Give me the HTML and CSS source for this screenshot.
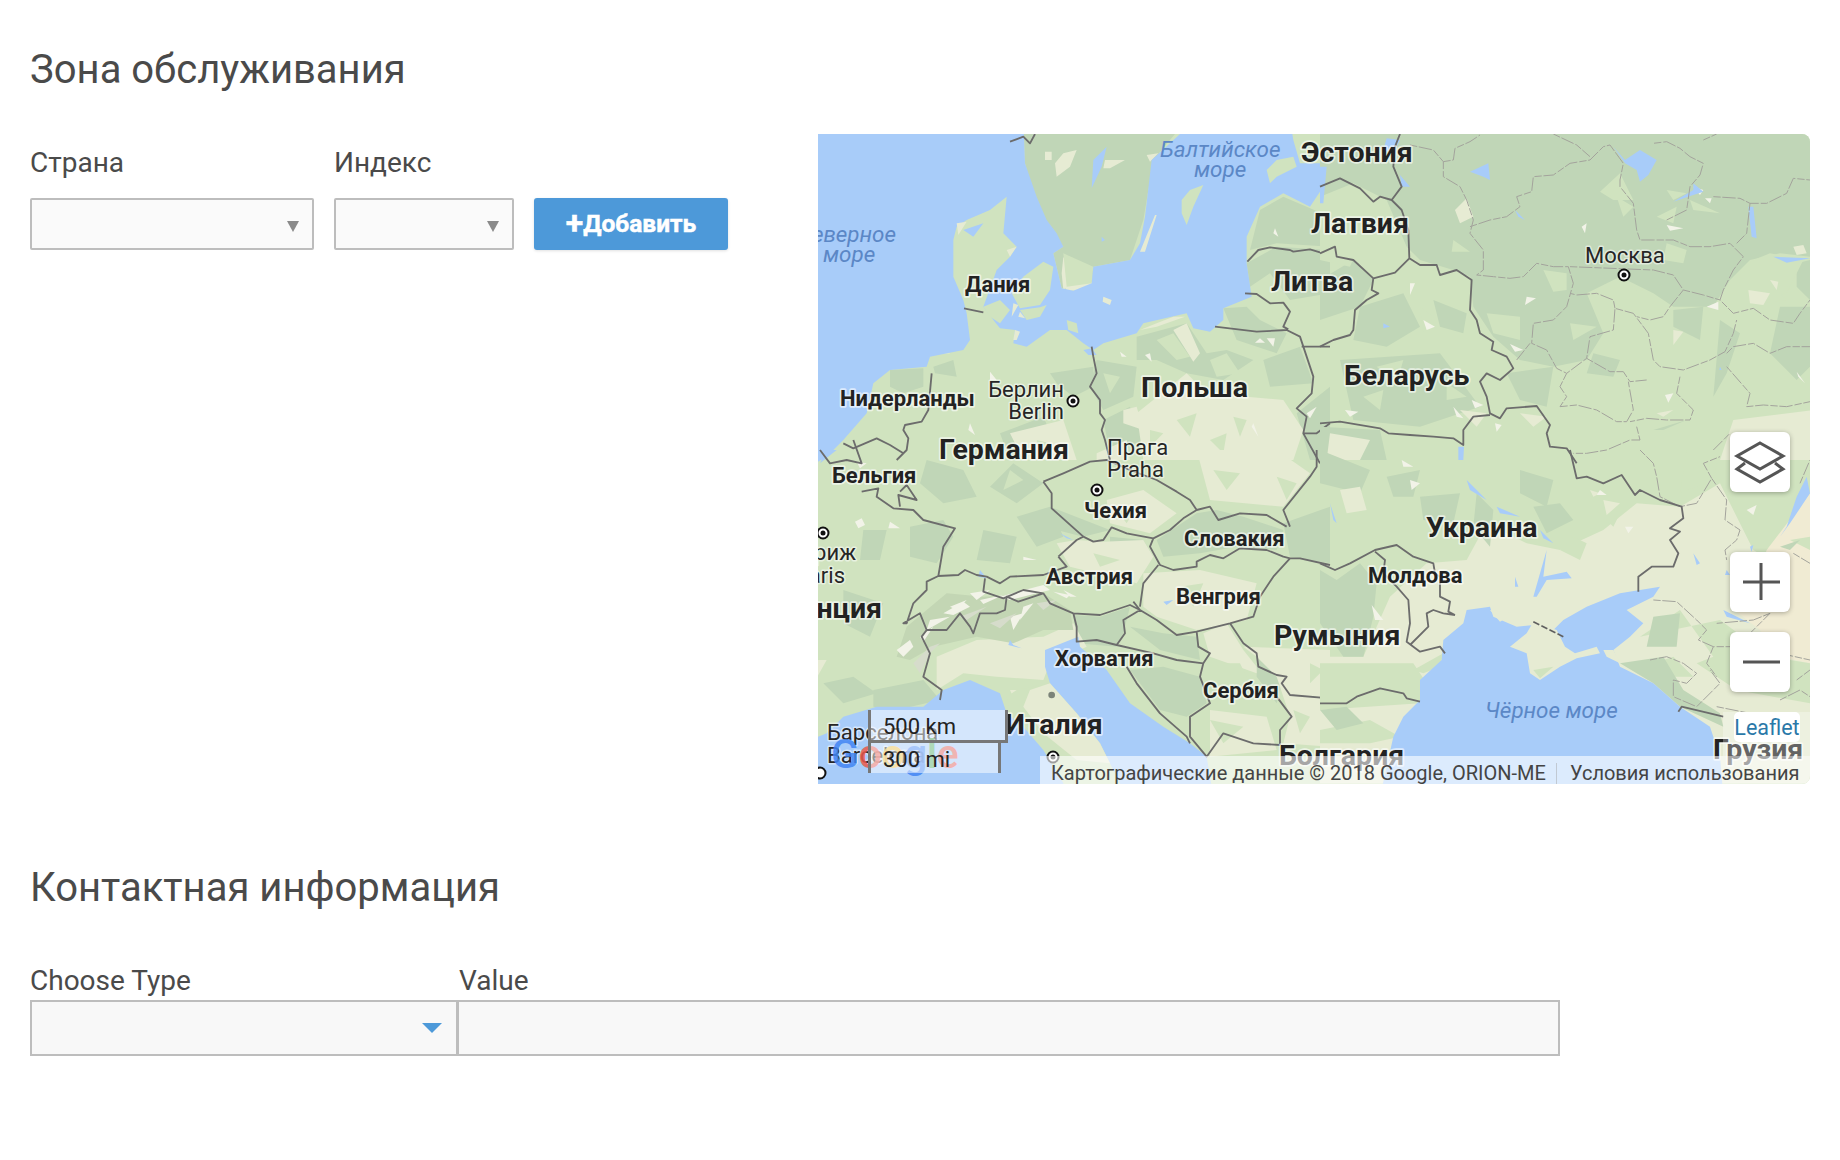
FILE: index.html
```html
<!DOCTYPE html>
<html lang="ru">
<head>
<meta charset="utf-8">
<title>Зона обслуживания</title>
<link rel="stylesheet" href="styles.css">
</head>
<body>
<section class="zone">
  <h2 class="heading">Зона обслуживания</h2>
  <div class="zone-row">
    <form class="zone-form">
      <div class="field field-country">
        <label class="field-label">Страна</label>
        <div class="select"><span class="caret"></span></div>
      </div>
      <div class="field field-zip">
        <label class="field-label">Индекс</label>
        <div class="select"><span class="caret"></span></div>
      </div>
      <button type="button" class="add-btn"><span class="plus">+</span>Добавить</button>
    </form>
    <div class="map">
      <svg class="map-svg" viewBox="818 134 992 650" width="992" height="650" xmlns="http://www.w3.org/2000/svg">
        <rect class="m" x="818" y="134" width="992" height="650"/>

        <!-- north-west quadrant -->
        <g transform="translate(810 120) scale(.33333)">
          <path class="d" d="M640,0H1130L1030,120L1000,300L960,420L850,440L845,490L755,505L730,400L760,380L700,300L670,220L645,130Z"/>
          <path class="d" d="M250,0H470L465,100L440,160L380,185L320,150L255,90Z"/>
          <path class="l" d="M300,42L420,42L400,90L350,110L310,90Z"/>
          <path class="l" d="M255,90L320,150L285,135L250,100Z"/>
          <path class="l" d="M760,100L800,90L780,140L740,170L735,130ZM885,120L945,120L900,145L880,145ZM705,95L725,95L725,120L705,120ZM1010,105L1045,100L1020,125ZM760,410L790,480L760,510L755,460ZM760,490L850,485L845,510L770,512Z"/>
          <path class="m" d="M760,400L850,440L845,490L770,500Z"/>
          <path class="d" d="M1310,430L1400,380L1560,390L1560,520L1440,540L1380,460L1320,500ZM1350,270L1420,230L1560,290L1560,380L1400,370L1320,390Z"/>
          <path class="d" d="M1240,565L1310,560L1350,600L1430,640L1400,700L1280,660ZM980,650L1130,610L1190,700L1250,690L1330,720L1240,780L1130,760L1040,720L980,720ZM860,720L980,740L970,830L880,870L840,800ZM720,760L850,740L850,800L790,830L740,790ZM1360,720L1470,680L1510,790L1380,800ZM1460,880L1560,800L1560,1020L1500,1020ZM880,900L960,860L1000,960L900,1000ZM570,940L700,890L740,980L600,1020ZM240,750L340,745L340,800L280,820L240,800ZM370,740L430,720L440,770L375,760Z"/>
          <path class="m" d="M1040,660L1090,640L1140,710L1100,720ZM1200,720L1250,700L1290,760L1220,770ZM880,760L930,770L900,820ZM1390,560L1420,590L1380,610Z"/>
          <path class="l" d="M980,880L1130,760L1180,810L1310,830L1420,840L1480,930L1450,1020H1000ZM600,940L760,900L800,1020H640ZM1090,630L1130,610L1170,700L1150,725ZM1320,1000L1360,900L1430,960L1400,1020ZM860,1000L950,960L960,1020H860ZM940,870L980,860L1000,930L940,910Z"/>
          <path class="m" d="M1270,890L1310,900L1290,950ZM1100,900L1160,880L1140,950ZM1200,960L1250,940L1240,1000ZM1020,930L1060,940L1020,980ZM680,960L720,970L690,1000Z"/>
          <path class="s" d="M1350,655L1365,668H1335ZM1005,705L1025,725L1020,700ZM930,695L950,710L935,710ZM480,910L495,945L475,930ZM540,755L560,780L540,780ZM395,700L420,700L400,690ZM1395,325L1405,350L1390,340ZM1330,910L1345,950L1325,920ZM1370,655L1390,680L1395,655ZM1490,880L1520,860L1500,895Z"/>
          <path class="w" d="M0,0H640L645,130L680,230L710,300L740,340L760,380L730,400L755,505L790,512L845,490L850,440L960,420L990,370L1005,290L1025,120L1110,42L1110,0H1440L1450,60L1470,130L1560,130L1560,190L1540,200L1500,260L1420,220L1350,260L1310,350L1310,430L1325,530L1240,565L1240,600L1200,635L1150,625L1130,580L1000,610L980,640L880,670L850,690L820,670L770,630L720,630L650,680L610,670L615,630L570,625L550,600L520,560L560,450L600,410L620,380L580,340L590,230L540,270L470,300L440,320L430,360L430,470L460,540L470,580L480,660L460,690L360,710L350,740L240,750L190,790L170,880L100,960L50,1010L0,1040Z"/>
          <path class="m" d="M640,470L700,425L730,440L720,510L690,555L630,565L605,520ZM630,570L690,562L710,555L690,590L650,600ZM520,560L570,540L600,570L570,610L540,590ZM770,600L800,610L805,640L775,630ZM1115,240L1140,210L1180,195L1150,260L1130,315L1115,280ZM1370,150L1400,120L1450,110L1460,140L1400,170L1380,190Z"/>
          <path class="l" d="M1035,285L990,395L1005,395L1040,285ZM880,530L905,540L900,555L878,545ZM615,630L630,635L620,660L610,660ZM610,550L625,555L605,590ZM630,575L645,595L625,590ZM990,630L1040,610L1090,590L1125,590L1040,620ZM440,310L470,305L445,345ZM590,390L620,380L600,410Z"/>
          <path class="w" d="M460,330L520,310L490,350ZM820,690L845,685L860,705L835,705ZM875,350L885,360L875,365ZM850,120L890,80L875,140L845,205Z"/>
          <path class="b" d="M600,65L640,50L660,70L675,42M462,565L520,577M845,680L850,710L860,760L840,800L870,840L870,880L885,900L875,930L885,960L900,1020M1215,620L1340,635L1430,630L1470,650L1510,770L1505,820L1460,865L1490,890L1480,940L1530,1030M1305,520L1340,522L1380,550L1420,548L1440,575L1420,620L1435,628M1475,680L1560,680M1312,425L1345,390L1380,382L1440,390L1450,395L1500,388L1545,402L1560,395M365,760L355,870L335,905L285,915L280,930L295,955L290,990L260,1020M100,970L130,985L200,955L240,975L280,1000M1480,940L1520,940L1560,910M1535,200L1560,185"/>
        </g>

        <!-- north-east quadrant -->
        <g transform="translate(1320 120) scale(.33333)">
          <path class="d" d="M0,0H1560V420L1380,400L1290,420L1230,480L1180,560L1060,560L1000,520L900,470L800,520L850,640L800,720L700,740L600,720L520,650L460,560L450,470L400,450L300,420L260,380L200,240L100,190L0,230Z"/>
          <path class="d" d="M60,720L360,700L480,860L300,920L100,900ZM0,480L100,420L160,480L120,560L0,600ZM1060,570L1150,560L1140,660L1060,620ZM1200,600L1260,640L1220,760L1180,830ZM1380,560L1470,560L1470,740L1430,780L1350,700ZM1430,430L1470,420L1470,540L1430,500ZM0,920L180,930L200,1020H0ZM1000,930L1100,900L1030,930ZM120,560L250,520L300,620L200,680L100,660ZM340,540L440,580L430,640L360,620ZM820,700L900,720L880,770L800,760ZM560,760L700,740L680,860L600,840Z"/>
          <path class="m" d="M670,450L740,460L740,510L700,515ZM840,215L900,160L940,240L880,240ZM1040,210L1100,220L1060,240ZM890,230L940,260L910,290ZM1010,290L1070,260L1060,310ZM1110,240L1200,280L1120,270ZM1300,420L1350,400L1450,420L1400,520L1300,540L1250,480ZM1350,490L1400,540L1320,550ZM0,280L120,370L90,440L0,420ZM1040,370L1100,390L1090,430L1030,420ZM500,580L600,590L600,660L520,640ZM750,610L830,620L760,660ZM890,480L970,510L930,515ZM400,360L450,395L395,395ZM300,560L340,590L310,640ZM170,740L250,720L230,790ZM380,790L440,830L380,840ZM130,830L190,810L180,870Z"/>
          <path class="l" d="M405,270L440,235L460,290L420,310ZM1285,510L1350,520L1330,555L1290,550ZM1060,630L1090,635L1060,675ZM1350,480L1375,485L1370,510ZM1420,380L1450,375L1460,400L1430,405ZM1010,880L1060,870L1030,890ZM1240,900L1560,860V1020H1200ZM30,940L150,960L120,1020H20ZM420,870L500,880L470,920ZM600,880L680,890L640,920Z"/>
          <path class="s" d="M620,530L648,535L615,555ZM785,320L800,310L795,340ZM1160,560L1195,545L1195,570ZM1040,315L1090,325L1050,332ZM1120,200L1150,210L1140,225ZM1155,235L1175,235L1170,250ZM1035,825L1060,820L1045,848ZM570,672L610,690L585,695ZM270,490L285,490L270,525ZM75,870L115,875L90,890ZM525,910L545,915L530,935ZM1430,755L1455,790L1435,770ZM310,600L345,620L320,630ZM455,840L490,855L465,865ZM400,860L430,895L410,890Z"/>
          <path class="w" d="M450,155L505,130L510,180L490,170ZM880,80L915,120L960,90L1010,120L985,165L960,185L950,150L915,130ZM1120,190L1150,215L1120,225L1060,245L1120,210ZM200,55L240,60L220,100L190,90ZM0,140L20,140L10,250L0,250ZM240,165L270,200L245,200ZM585,270L615,300L595,290ZM1285,260L1300,260L1310,355L1295,350ZM1360,410L1470,415L1400,428ZM1200,740L1205,750L1198,750ZM415,980L432,980L430,1020H415ZM190,610L210,620L190,625Z"/>
          <path class="r" d="M270,75L340,90L370,125L370,170L420,200L440,240L460,300L450,340L490,390L490,450L470,465L520,470L570,475L610,470L650,430L700,440L745,440M370,125L400,120L405,85L450,65L480,45M450,320L510,300L560,290L600,260L590,230L635,215L640,170L700,165L750,130L810,120L850,80L870,75M700,42L770,75L810,110M870,75L910,130L900,180L900,200L940,250L950,330L960,360L1000,360L1060,360L1110,380L1170,380L1230,370L1270,410L1240,450L1210,510L1200,540L1240,580L1300,565L1350,600L1420,610L1440,580L1470,540M745,440L760,490L740,560L700,600L640,610L635,670L680,690L710,745L740,760L800,715L810,650L880,630L885,565L940,580L985,640L1000,720L1020,740L1090,750L1170,720M885,565L880,540L830,520L770,525L750,520M630,670L590,720M800,715L870,755L910,755L930,785L980,780M740,760L720,800L740,830L720,860L770,855L830,870L890,905L920,905L940,870L925,785M1080,770L1070,820L1120,870L1110,900L1040,900L980,895L930,905M750,440L1000,450L1060,465L1090,510L1150,525L1200,540M1090,510L1050,560L1030,590L990,600L950,590M1220,740L1290,820L1280,860L1330,855L1400,860L1470,845M1220,700L1240,680L1300,670L1350,700L1400,680L1470,680M1170,720L1215,695L1240,640L1250,600M1180,230L1260,235L1290,250L1340,250L1400,220L1420,175L1470,180M1040,300L1100,270L1110,200L1140,165L1150,130L1110,110L1080,85L1040,65L1000,70M1150,60L1190,42M1160,1010L1230,940M950,920L960,960L930,960L860,990L800,1000L760,1000M1290,250L1280,340L1250,370"/>
          <path class="b" d="M240,42L225,80L220,140L245,200L215,240L245,270L265,330L268,415M0,200L60,175L120,205L160,245L180,230L215,240M0,400L45,380L50,410L100,420L160,475L225,458L268,415M268,415L300,435L350,435L360,465L410,450L455,480L450,570L470,600L480,640L520,665L515,690L560,710L580,745L540,780L500,760L480,785L500,830L510,880L540,895L560,865L650,858L690,915L680,940L690,980L740,985L770,1030M160,475L155,510L175,520L140,540L105,570L100,630L90,645L40,660L0,680M0,910L60,905L180,925L205,940L270,945L340,950L400,955L430,975L430,930L460,890L510,885"/>
        </g>

        <!-- south-west quadrant -->
        <g transform="translate(810 450) scale(.33333)">
          <path class="d" d="M350,30L460,60L500,140L400,160L330,100ZM610,40L700,100L620,160L540,110ZM300,230L400,210L430,260L380,340L300,320ZM160,240L230,240L210,330L150,330ZM520,240L620,260L600,340L500,330ZM620,200L720,170L760,260L680,290ZM100,420L220,460L180,560L100,520ZM1160,190L1220,180L1300,200L1420,240L1400,300L1280,290L1170,310L1060,320L1040,270ZM1420,220L1560,170V340L1440,320ZM720,170L900,240L820,260L740,240ZM900,260L1000,270L1030,320L900,310ZM40,700L130,680L200,730L100,760ZM190,720L340,690L390,750L260,780L190,770Z"/>
          <path class="d" d="M790,495L870,500L960,470L940,550L920,590L800,580ZM960,530L1060,550L1160,560L1170,630L1050,600ZM960,660L1060,650L1170,680L1190,760L1130,800L1050,780ZM1340,600L1420,680L1400,760L1340,680Z"/>
          <path class="l" d="M1000,370L1170,360L1340,400L1310,510L1160,540L1040,500L1000,470ZM1300,590L1560,600V890L1420,880L1440,800L1400,680L1340,620ZM1180,550L1250,520L1300,600L1340,650L1340,670L1200,620ZM380,620L500,570L700,560L790,520L830,590L720,640L700,690L560,680L460,670L380,720ZM740,280L800,270L880,275L1000,270L1030,320L980,400L780,350ZM1160,0L1400,0L1500,70L1420,170L1200,150ZM890,150L1000,120L1100,190L1020,250L900,220ZM0,630L50,630L0,720ZM600,720L700,720L800,800L890,930L770,920L650,830ZM1200,780L1370,800L1400,900L1200,920Z"/>
          <path class="m" d="M1240,640L1290,640L1310,680L1240,700ZM1110,410L1180,400L1150,470ZM600,60L640,90L580,120ZM1210,60L1290,70L1250,120ZM1400,80L1460,100L1430,150ZM1200,810L1300,830L1240,880ZM850,310L930,330L870,350ZM780,60L820,90L770,100ZM920,180L980,170L950,220ZM1500,640L1540,660L1500,700ZM1450,780L1500,800L1470,850Z"/>
          <path class="a" d="M290,530L410,430L520,440L700,430L780,480L790,540L700,540L610,580L500,560L370,590L300,630L260,620Z"/>
          <path class="s" d="M400,490L460,455L480,470L430,495ZM480,430L540,420L500,450ZM570,440L700,405L720,420L600,450ZM730,425L780,435L770,445ZM360,510L420,500L350,540ZM600,500L640,490L610,540ZM260,600L300,570L310,590L280,620ZM135,215L155,205L165,225L145,235ZM240,215L270,235L235,235ZM640,320L680,330L640,330ZM760,420L800,440L780,440ZM140,35L170,40L150,55ZM510,450L580,435L520,462ZM640,470L670,460L630,510ZM420,470L470,450L440,480ZM330,560L370,530L340,575Z"/>
          <path class="e" d="M310,640L360,590L390,580L360,610L330,670ZM450,500L530,470L470,510ZM540,520L620,490L570,535ZM680,460L740,450L700,480Z"/>
          <path class="w" d="M0,870L50,850L100,800L200,770L340,770L400,720L480,690L570,730L590,790L640,830L700,900L760,1000V1040H0Z"/>
          <path class="w" d="M705,600L780,570L805,560L810,590L890,660L960,760L1060,830L1140,880L1190,920L1210,1040H830L780,920L720,800L720,700L705,650Z"/>
          <path class="m" d="M720,700L800,790L870,880L950,1040H780L770,950L690,870L600,780L590,740L620,720Z"/>
          <path class="l" d="M720,700L800,790L870,880L900,940L800,930L700,850L640,770L660,720Z"/>
          <path class="w" d="M50,0L80,0L30,40ZM510,360L530,385L505,380ZM750,250L790,270L770,265ZM1060,455L1090,450L1070,465ZM600,570L610,585L635,595L595,585Z"/>
          <path class="dot" d="M715,735A10,10 0 1,0 735,735A10,10 0 1,0 715,735Z"/>
          <path class="b" d="M700,95L760,70L840,35L890,30L960,60L1040,90L1100,125L1140,150L1160,180M700,95L725,130L725,175L820,260L850,275L880,270L905,232L950,250L1030,265L1020,290L1050,345L1090,360L1160,350L1160,335L1200,315L1240,325L1290,295L1370,300L1420,320L1440,325M1030,265L1080,240L1120,205L1160,180L1200,170L1225,210L1290,190L1370,195L1430,230M1520,0L1520,50L1500,80L1420,180L1440,230M1440,325L1390,380L1350,440L1330,500L1260,520L1160,545L1100,555L1040,510L990,480L970,455M1440,325L1470,325L1560,345M1260,520L1300,580L1340,610L1345,650L1400,675L1430,680L1415,700L1440,735L1560,745M1400,740L1445,800L1410,840L1410,885M990,470L1000,400L1045,345M700,430L720,460L790,490L870,495L960,465L990,480M790,490L800,530L800,575L860,570L920,585L945,550L940,510L990,480M920,585L1030,610L1100,630L1180,640L1200,610L1165,590L1160,545M950,650L980,700L1050,790L1130,860L1140,880M1180,640L1170,680L1200,760L1140,800L1140,860L1190,920L1240,850L1330,880L1410,885M745,320L800,270L820,260M745,320L770,350L700,375L600,380L570,400L530,380L500,375L465,360L445,375L385,378L350,395L350,420L310,460L290,520L280,520L330,490L350,540L410,540L450,490L480,530L490,550L510,490L560,490L585,480L590,440L625,455L700,430L640,420L580,445L520,425L525,385M385,378L400,290L435,235L340,210L310,180L250,175L200,140L205,115L155,125M270,170L265,135L320,150L290,105L270,125M350,540L335,560L360,610L340,680L395,720L390,750M30,0L60,40L110,30L155,40L130,-30"/>
        </g>

        <!-- south-east quadrant -->
        <g transform="translate(1320 450) scale(.33333)">
          <path class="l" d="M320,340L440,330L500,220L620,280L720,300L850,240L950,160L1080,170L1200,100L1300,300L1470,400V1000H0V620L130,620L210,440Z"/>
          <path class="sand" d="M1340,300L1470,130V640L1380,620L1320,540L1230,470L1300,420Z"/>
          <path class="m" d="M0,640L280,640L320,700L300,760L0,780ZM960,560L1080,480L1180,620L1130,640L1250,720L1470,760V640L1350,620L1200,510ZM0,840L150,810L240,860L150,880L0,880ZM850,160L900,190L880,230L830,180ZM720,300L760,260L800,280L780,330ZM1410,270L1470,260L1470,300ZM1000,640L1060,620L1120,680L1060,680ZM1100,0L1200,0L1180,90L1080,130ZM280,660L370,610L360,650L310,670Z"/>
          <path class="d" d="M0,360L50,390L120,340L170,400L160,500L130,620L70,620L0,520ZM470,130L520,180L510,290L460,230ZM900,640L1030,620L1090,720L1200,790L1210,830L1080,770L1000,700ZM1000,500L1080,490L1070,590L980,590ZM0,0L150,60L120,130L0,100ZM200,80L300,60L280,140L220,140ZM300,140L420,130L400,220L310,210ZM600,60L700,90L680,170L600,130ZM640,170L720,160L760,210L680,250ZM1380,290L1440,270L1410,300ZM0,780L80,770L130,820L50,840Z"/>
          <path class="l" d="M60,120L120,110L140,180L80,190ZM810,120L840,130L820,140ZM850,150L900,160L860,195Z"/>
          <path class="s" d="M915,230L940,230L925,250ZM245,30L280,50L250,50ZM270,90L300,100L275,120ZM155,465L190,510L165,510ZM1280,180L1310,165L1300,195ZM840,120L860,135L830,135Z"/>
          <path class="w" d="M180,1040L220,860L250,800L300,750L300,690L365,630L370,570L430,520L440,480L510,470L520,500L590,530L640,525L700,540L730,510L800,470L900,430L1020,410L1000,440L920,480L970,520L930,560L880,600L900,650L1000,700L1080,770L1170,830L1200,920L1210,1040Z"/>
          <path class="w" d="M640,440L680,300L670,380L740,365L755,385L680,390L650,440ZM1120,310L1140,340L1130,345ZM1210,480L1290,520L1220,500ZM1380,260L1410,220L1470,130L1460,80L1430,140L1400,230ZM1290,290L1300,285L1295,305ZM30,160L50,220L40,210ZM440,90L500,150L450,120ZM530,170L600,200L540,190ZM660,240L700,280L670,265ZM585,380L595,410L585,410ZM1220,360L1230,375L1215,375Z"/>
          <path class="l" d="M640,515L710,540L735,590L765,610L830,590L840,610L770,625L720,650L660,690L630,670L620,610L570,590L620,550ZM510,480L580,490L540,515ZM850,600L880,600L900,640L860,620Z"/>
          <path class="m" d="M640,660L700,650L660,685Z"/>
          <path class="r" d="M960,0L1000,40L1010,80L1020,140L1080,170L1130,160L1175,85L1220,150L1215,210L1260,240L1250,270L1215,300L1220,330M1175,85L1150,40L1200,20M1420,310L1470,340M1440,100L1470,30M1000,450L1070,455L1130,510L1160,540L1135,570L1180,590L1250,590L1350,490M1350,490L1300,510L1190,520M990,630L1040,620L1090,640L1130,670L1100,700L1060,690L1060,740L1130,770L1200,700L1170,660M1280,620L1380,610L1470,630M1180,590L1160,640L1190,680M1430,690L1470,660M1380,750L1440,720L1470,740M1190,770L1290,790"/>
          <path class="b" d="M750,0L770,85L800,80L850,100L905,75L945,135L960,120L1020,150L1085,170L1090,205L1050,235L1080,245L1050,270L1075,310L1060,350L995,350L955,380L955,425M0,340L45,360L90,340L165,300L230,285L280,320L340,340L345,370L360,380L360,440L390,455L385,485L405,495M165,305L195,330L190,370L230,410L265,450L270,520L260,575L300,605L360,590L375,610M270,585L325,530L320,490L340,480L370,490L405,495M0,760L80,760L110,740L180,715L250,730L260,745L300,755M1075,785L1085,770L1170,790L1210,800"/>
          <path class="bd" d="M640,515L730,560"/>
        </g>

        <!-- place names -->
        <text class="sea" x="1160" y="157">Балтийское</text>
        <text class="sea" x="1194" y="177">море</text>
        <text class="sea" x="896" y="242" text-anchor="end">Северное</text>
        <text class="sea" x="823" y="262">море</text>
        <text class="sea" x="1485" y="718">Чёрное море</text>

        <text class="town" x="827" y="740">Барселона</text>
        <text class="town" x="827" y="763">Barcelona</text>
        <text class="town" x="1064" y="397" text-anchor="end">Берлин</text>
        <text class="town" x="1064" y="419" text-anchor="end">Berlin</text>
        <text class="town" x="1107" y="455">Прага</text>
        <text class="town" x="1107" y="477">Praha</text>
        <text class="town" x="856" y="560" text-anchor="end">Париж</text>
        <text class="town" x="845" y="583" text-anchor="end">Paris</text>
        <text class="town" x="1585" y="263">Москва</text>

        <text class="big" x="1301" y="162">Эстония</text>
        <text class="big" x="1311" y="233">Латвия</text>
        <text class="big" x="1271" y="291">Литва</text>
        <text class="big" x="1141" y="397">Польша</text>
        <text class="big" x="939" y="459">Германия</text>
        <text class="big" x="1344" y="385">Беларусь</text>
        <text class="big" x="1426" y="537">Украина</text>
        <text class="big" x="1274" y="645">Румыния</text>
        <text class="big" x="1005" y="734">Италия</text>
        <text class="big" x="882" y="618" text-anchor="end">Франция</text>
        <text class="big" x="1279" y="765">Болгария</text>
        <text class="big" x="1713" y="759">Грузия</text>

        <text class="mid" x="965" y="292">Дания</text>
        <text class="mid" x="840" y="406">Нидерланды</text>
        <text class="mid" x="832" y="483">Бельгия</text>
        <text class="mid" x="1084" y="518">Чехия</text>
        <text class="mid" x="1184" y="546">Словакия</text>
        <text class="mid" x="1046" y="584">Австрия</text>
        <text class="mid" x="1176" y="604">Венгрия</text>
        <text class="mid" x="1055" y="666">Хорватия</text>
        <text class="mid" x="1203" y="698">Сербия</text>
        <text class="mid" x="1368" y="583">Молдова</text>

        <g class="capital">
          <circle class="cap-ring" cx="1073" cy="401" r="5.5"/><circle class="cap-dot" cx="1073" cy="401" r="2.5"/>
          <circle class="cap-ring" cx="1097" cy="490" r="5.5"/><circle class="cap-dot" cx="1097" cy="490" r="2.5"/>
          <circle class="cap-ring" cx="823" cy="533" r="5.5"/><circle class="cap-dot" cx="823" cy="533" r="2.5"/>
          <circle class="cap-ring" cx="1624" cy="275" r="5.5"/><circle class="cap-dot" cx="1624" cy="275" r="2.5"/>
          <circle class="cap-ring" cx="1053" cy="757" r="5.5"/><circle class="cap-dot" cx="1053" cy="757" r="2.5"/>
          <circle class="cap-ring" cx="820" cy="773" r="5.5"/>
        </g>
      </svg>

      <div class="google-logo"><span class="g-blue">G</span><span class="g-red">o</span><span class="g-yellow">o</span><span class="g-blue">g</span><span class="g-green">l</span><span class="g-red">e</span></div>

      <div class="scale">
        <div class="scale-km">500 km</div>
        <div class="scale-mi">300 mi</div>
      </div>

      <div class="attribution">
        <span class="attr-data">Картографические данные © 2018 Google, ORION-ME</span>
        <span class="attr-terms">Условия использования</span>
      </div>

      <div class="leaflet-panel"><a class="leaflet-link">Leaflet</a></div>

      <div class="map-ctl ctl-layers">
        <svg viewBox="0 0 60 60" width="60" height="60"><path class="ctl-icon" d="M30,11L53,24L30,37L7,24ZM15,31L7,37L30,50L53,37L45,31"/></svg>
      </div>
      <div class="map-ctl ctl-plus">
        <svg viewBox="0 0 60 60" width="60" height="60"><path class="ctl-icon" d="M13,30H50M31,11V48"/></svg>
      </div>
      <div class="map-ctl ctl-minus">
        <svg viewBox="0 0 60 60" width="60" height="60"><path class="ctl-icon" d="M13,30H50"/></svg>
      </div>
    </div>
  </div>
</section>

<section class="contact">
  <h2 class="heading">Контактная информация</h2>
  <div class="contact-row">
    <div class="contact-type">
      <label class="field-label">Choose Type</label>
      <div class="input-box"><span class="caret-blue"></span></div>
    </div>
    <div class="contact-value">
      <label class="field-label">Value</label>
      <div class="input-box"></div>
    </div>
  </div>
</section>
</body>
</html>
```

FILE: styles.css
```css
* { box-sizing: border-box; }
html, body { margin: 0; padding: 0; background: #fff; }
body {
  width: 1840px;
  height: 1160px;
  overflow: hidden;
  font-family: Roboto, "Noto Sans", sans-serif;
  color: #4a4a4a;
}
.heading {
  margin: 0;
  font-size: 40px;
  line-height: 44px;
  font-weight: 400;
  color: #4a4a4a;
}
.zone { padding: 48px 30px 0; }
.zone-row { display: flex; margin-top: 42px; }
.zone-form {
  width: 788px;
  flex: none;
  display: flex;
  align-items: flex-start;
  gap: 20px;
  padding-top: 14px;
}
.field-label {
  display: block;
  font-size: 28px;
  line-height: 30px;
  color: #4a4a4a;
}
.field-country { width: 284px; }
.field-zip { width: 180px; }
.select {
  position: relative;
  height: 52px;
  margin-top: 20px;
  background: #fafafa;
  border: 2px solid #bdbdbd;
  border-radius: 2px;
}
.caret {
  position: absolute;
  right: 13px;
  top: 21px;
  border-left: 6px solid transparent;
  border-right: 6px solid transparent;
  border-top: 11px solid #8a8a8a;
}
.add-btn {
  margin-top: 50px;
  width: 194px;
  height: 52px;
  border: 0;
  border-radius: 3px;
  background: #4d99d9;
  color: #fff;
  font: 700 24.5px/50px Roboto, sans-serif;
  -webkit-text-stroke: .5px #fff;
  padding: 0;
  box-shadow: 0 1px 3px rgba(0, 0, 0, .12);
}
.plus { font-size: 32px; vertical-align: -2px; line-height: 32px; }

/* map */
.map {
  position: relative;
  flex: none;
  width: 992px;
  height: 650px;
  overflow: hidden;
  border-radius: 0 8px 8px 0;
}
.map-svg { display: block; }
.m { fill: #d0e3bf; }
.d { fill: #c0d6b7; }
.l { fill: #e6ebd3; }
.s { fill: #f2f3e8; }
.a { fill: #c3d6b4; }
.e { fill: #d6dccb; }
.w { fill: #a8ccf9; }
.sand { fill: #f0ebd3; }
.dot { fill: #7b8378; }
.b, .bd, .r { fill: none; stroke-linejoin: round; }
.b { stroke: #6c6c6c; stroke-width: 5.5; }
.bd { stroke: #5f5f5f; stroke-width: 5; stroke-dasharray: 20 7; }
.r { stroke: #a3a39c; stroke-width: 3; stroke-dasharray: 22 5 40 6; }

.sea, .town, .big, .mid {
  font-family: Roboto, sans-serif;
  paint-order: stroke;
  stroke-linejoin: round;
}
.sea { font-size: 22.4px; font-style: italic; fill: #5b87c6; }
.town {
  font-size: 22px;
  fill: #262626;
  stroke: rgba(255, 255, 255, .5);
  stroke-width: 3px;
}
.big, .mid {
  font-weight: 700;
  fill: #222;
  stroke: rgba(255, 255, 255, .6);
  stroke-width: 3.5px;
}
.big { font-size: 28.5px; }
.mid { font-size: 22px; }
.cap-ring { fill: #fff; stroke: #111; stroke-width: 2; }
.cap-dot { fill: #111; }

.google-logo {
  position: absolute;
  left: 13px;
  top: 598px;
  font: 500 41px/44px Roboto, sans-serif;
  letter-spacing: -.5px;
  opacity: .85;
}
.g-blue { color: #4285f4; }
.g-red { color: #e9584c; }
.g-yellow { color: #f5c23e; }
.g-green { color: #4fae5a; }

.scale {
  position: absolute;
  left: 50px;
  top: 576px;
  font-size: 22px;
  color: #222;
}
.scale-km, .scale-mi {
  background: rgba(255, 255, 255, .5);
  border-left: 3px solid #777;
  border-right: 3px solid #777;
  padding-left: 12px;
}
.scale-km {
  width: 140px;
  height: 33px;
  line-height: 33px;
  border-bottom: 3px solid #777;
}
.scale-mi {
  width: 133px;
  height: 30px;
  line-height: 33px;
}

.attribution {
  position: absolute;
  left: 222px;
  right: 0;
  bottom: 0;
  height: 28px;
  display: flex;
  align-items: center;
  padding: 7px 0 0 11px;
  background: rgba(255, 255, 255, .6);
  font-size: 20px;
  line-height: 21px;
  color: #444;
  white-space: nowrap;
}
.attr-data {
  width: 506px;
  flex: none;
  border-right: 1px solid rgba(160, 160, 160, .45);
}
.attr-terms { margin-left: 13px; }

.leaflet-panel {
  position: absolute;
  left: 905px;
  top: 578px;
  width: 87px;
  height: 44px;
  padding-left: 11px;
  background: rgba(255, 255, 255, .3);
}
.leaflet-link {
  display: block;
  width: 66px;
  height: 30px;
  background: #fff;
  border-radius: 5px;
  text-align: center;
  font-size: 21.5px;
  line-height: 32px;
  color: #2a78a8;
}

.map-ctl {
  position: absolute;
  left: 912px;
  width: 60px;
  height: 60px;
  background: #fff;
  border-radius: 6px;
  box-shadow: 0 1px 5px rgba(0, 0, 0, .3);
}
.map-ctl svg { display: block; }
.ctl-layers { top: 298px; }
.ctl-plus { top: 418px; }
.ctl-minus { top: 498px; }
.ctl-icon { fill: none; stroke: #555; stroke-width: 3; }

/* contact */
.contact { padding: 82px 30px 0; }
.contact-row { display: flex; margin-top: 56px; width: 1530px; }
.contact-type { width: 428px; flex: none; }
.contact-value { flex: 1; margin-left: -1px; }
.contact-value .field-label { padding-left: 2px; }
.input-box {
  position: relative;
  height: 56px;
  margin-top: 4px;
  background: #f8f8f8;
  border: 2px solid #bdbdbd;
}
.caret-blue {
  position: absolute;
  right: 14px;
  top: 21px;
  border-left: 10px solid transparent;
  border-right: 10px solid transparent;
  border-top: 10px solid #4d99d9;
}
```
